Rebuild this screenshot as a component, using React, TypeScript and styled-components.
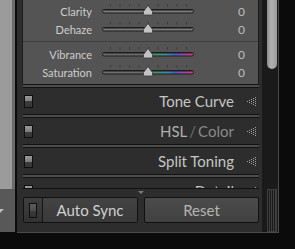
import React from 'react'
import styled, {createGlobalStyle} from 'styled-components'

const GlobalStyle = createGlobalStyle`
  html, body {
    margin: 0;
    padding: 0;
    background: #0b0b0b;
  }

  body {
    font-family: Lato, "Open Sans", sans-serif;
  }
`

const Screen = styled.div`
  width: 295px;
  height: 249px;
  display: flex;
  align-items: flex-start;
  overflow: hidden;
`

const LeftStrip = styled.div`
  width: 15px;
  height: 232px;
  flex-shrink: 0;
  display: flex;
  flex-direction: column;
`

const LeftTop = styled.div`
  height: 189px;
  box-sizing: border-box;
  background: #9b9b9b;
  border-right: 3px solid #6b6b6b;
`

const LeftBottom = styled.div`
  flex: 1;
  background: #585858;
  display: flex;
  align-items: center;
`

const DropArrow = styled.div`
  margin-left: -4px;
  border-left: 4px solid transparent;
  border-right: 4px solid transparent;
  border-top: 4px solid #bdbdbd;
`

const Panel = styled.div`
  margin-left: 2px;
  width: 261px;
  height: 232px;
  flex-shrink: 0;
  background: #2d2d2d;
  border-right: 1px solid #4b4b4b;
  border-bottom: 1px solid #4b4b4b;
  display: grid;
  grid-template-columns: 245px 16px;
  grid-template-rows: 188px 44px;
`

const ScrollArea = styled.div`
  overflow: hidden;
  padding: 0 3px 0 5px;
`

const Scrollbar = styled.div`
  background: #1a1a1a;
`

const Thumb = styled.div`
  margin-left: 5px;
  width: 10px;
  height: 69px;
  border-radius: 0 0 5px 5px;
  background: linear-gradient(to right, #8a8a8a, #b2b2b2 40%, #9a9a9a);
`

const BasicSection = styled.div`
  height: 84px;
  box-sizing: border-box;
  padding: 2px 0 3px;
  background: #545454;
  border-left: 1px solid #1c1c1c;
  border-right: 1px solid #1c1c1c;
`

const SliderRow = styled.div`
  height: 18px;
  display: flex;
  align-items: center;
`

const Label = styled.div`
  width: 69px;
  text-align: right;
  font-size: 11px;
  color: #cecece;
`

const Value = styled.div`
  width: 51px;
  text-align: right;
  font-size: 12px;
  color: #bdbdbd;
`

const Track = styled.svg`
  display: block;
  margin-left: 10px;
  flex-shrink: 0;
`

const Divider = styled.div`
  height: 1px;
  margin: 3px 0;
  background: #3e3e3e;
`

const Separator = styled.div`
  height: 4px;
  box-sizing: border-box;
  margin-left: 1px;
  background: #4c4c4c;
  border-top: 1px solid #121212;
  border-bottom: 1px solid #121212;
`

const Header = styled.div`
  height: 26px;
  display: flex;
  align-items: center;
  padding: 0 3px 0 2px;
`

const Toggle = styled.div`
  width: 9px;
  height: 13px;
  box-sizing: border-box;
  border: 1px solid #0f0f0f;
  background: linear-gradient(#9b9b9b 0, #7c7c7c 50%, #3d3d3d 50%, #353535 100%);
`

const Title = styled.div<{$color?: string}>`
  margin-left: auto;
  margin-right: 13px;
  font-size: 15px;
  color: ${p => p.$color ?? '#c6c6c6'};
`

const Dim = styled.span<{$color: string}>`
  color: ${p => p.$color};
`

const Slash = styled.span`
  color: #6e6e6e;
  margin: 0 2px;
`

const BottomBar = styled.div`
  display: flex;
  flex-direction: column;
  padding: 0 3px 0 5px;
`

const BarLine = styled.div`
  height: 1px;
  background: #131313;
`

const CollapseRow = styled.div`
  height: 8px;
  display: flex;
  justify-content: center;
  align-items: flex-start;
  padding-top: 2px;
  box-sizing: border-box;
`

const CollapseArrow = styled.div`
  border-left: 3px solid transparent;
  border-right: 3px solid transparent;
  border-top: 3px solid #787878;
`

const ButtonRow = styled.div`
  height: 26px;
  display: flex;
  gap: 6px;
  padding-left: 1px;
`

const SyncGroup = styled.div`
  width: 115px;
  box-sizing: border-box;
  display: flex;
  border: 1px solid #111;
  border-radius: 2px;
  overflow: hidden;
`

const SwitchCell = styled.div`
  width: 18px;
  border-right: 1px solid #151515;
  background: linear-gradient(#3e3e3e, #333);
  display: flex;
  align-items: center;
  justify-content: center;
`

const Switch = styled.div`
  width: 8px;
  height: 15px;
  box-sizing: border-box;
  border: 1px solid #0e0e0e;
  background: linear-gradient(#5c5c5c 0, #4e4e4e 50%, #6a6a6a 50%, #6a6a6a 57%, #3a3a3a 57%, #333 100%);
`

const Button = styled.div<{$bright?: boolean}>`
  flex: 1;
  display: flex;
  align-items: center;
  justify-content: center;
  font-size: 15px;
  color: ${p => p.$bright ? '#d0d0d0' : '#b4b4b4'};
  background: ${p => p.$bright
    ? 'linear-gradient(#434343, #393939)'
    : 'linear-gradient(#4b4b4b, #414141)'};
`

const ResetButton = styled(Button)`
  flex: none;
  width: 115px;
  box-sizing: border-box;
  border: 1px solid #111;
  border-radius: 2px;
`

const GripCell = styled.div`
  background: #1a1a1a;
  padding: 1px 0 0 5px;
`

const Grip = styled.div`
  width: 10px;
  height: 43px;
  box-sizing: border-box;
  border: 1px solid #3e3e3e;
  background: repeating-linear-gradient(to right, transparent 0 1px, #3e3e3e 1px 2px);
`

const ticks = [8, 17.5, 27, 36.5, 46, 55.5, 65, 74.5, 84]

const Slider = ({colored, id}: {colored?: boolean, id: string}) => (
    <Track width={92} height={18} viewBox="0 0 92 18">
        <defs>
            <linearGradient id={id} x1="0" x2="1" y1="0" y2="0">
                {colored ? <>
                    <stop offset="0" stopColor="#6c6c6c"/>
                    <stop offset="0.48" stopColor="#6a6e6a"/>
                    <stop offset="0.58" stopColor="#3f9a5c"/>
                    <stop offset="0.7" stopColor="#3b8fa4"/>
                    <stop offset="0.8" stopColor="#4a5ec4"/>
                    <stop offset="0.9" stopColor="#a443b4"/>
                    <stop offset="1" stopColor="#d8405c"/>
                </> : <>
                    <stop offset="0" stopColor="#7a7a7a"/>
                    <stop offset="1" stopColor="#7a7a7a"/>
                </>}
            </linearGradient>
        </defs>
        {ticks.map(x => <line key={x} x1={x + 0.5} x2={x + 0.5} y1={2} y2={4.5} stroke="#3a3a3a"/>)}
        <rect x={0.5} y={7.5} width={91} height={3.5} rx={1.75} fill={`url(#${id})`} stroke="#1c1c1c"/>
        <line x1={2} x2={90} y1={8.5} y2={8.5} stroke="#2a2a2a" strokeOpacity={0.6}/>
        <path d="M46 3.5 L50.5 9.5 V12 Q50.5 13 49.5 13 H42.5 Q41.5 13 41.5 12 V9.5 Z"
              fill="#c3c3c3" stroke="#3a3a3a" strokeWidth={0.8}/>
    </Track>
)

const DotTriangle = () => {
    const dots: React.ReactNode[] = []
    for (let c = 0; c < 5; c++) {
        for (let r = -c; r <= c; r += 2) {
            dots.push(<rect key={`${c}-${r}`} x={c * 2} y={4 + r} width={1} height={1} fill="#a0a0a0"/>)
        }
    }
    return <svg width={9} height={9} viewBox="0 0 9 9">{dots}</svg>
}

const rows = [
    {label: 'Clarity', colored: false},
    {label: 'Dehaze', colored: false},
    {label: 'Vibrance', colored: true},
    {label: 'Saturation', colored: true},
]

const SectionHeader = ({children, color}: {children: React.ReactNode, color?: string}) => (
    <Header>
        <Toggle/>
        <Title $color={color}>{children}</Title>
        <DotTriangle/>
    </Header>
)

const App = () => {
    return (
        <Screen>
            <GlobalStyle/>
            <LeftStrip>
                <LeftTop/>
                <LeftBottom><DropArrow/></LeftBottom>
            </LeftStrip>
            <Panel>
                <ScrollArea>
                    <BasicSection>
                        {rows.map((r, i) => (
                            <React.Fragment key={r.label}>
                                {i === 2 && <Divider/>}
                                <SliderRow>
                                    <Label>{r.label}</Label>
                                    <Slider colored={r.colored} id={`grad-${i}`}/>
                                    <Value>0</Value>
                                </SliderRow>
                            </React.Fragment>
                        ))}
                    </BasicSection>
                    <Separator/>
                    <SectionHeader>Tone Curve</SectionHeader>
                    <Separator/>
                    <SectionHeader color="#b0b0b0">
                        HSL<Slash>/</Slash><Dim $color="#8a8a8a">Color</Dim>
                    </SectionHeader>
                    <Separator/>
                    <SectionHeader>Split Toning</SectionHeader>
                    <Separator/>
                    <SectionHeader>Detail</SectionHeader>
                </ScrollArea>
                <Scrollbar>
                    <Thumb/>
                </Scrollbar>
                <BottomBar>
                    <BarLine/>
                    <CollapseRow><CollapseArrow/></CollapseRow>
                    <ButtonRow>
                        <SyncGroup>
                            <SwitchCell><Switch/></SwitchCell>
                            <Button $bright>Auto Sync</Button>
                        </SyncGroup>
                        <ResetButton>Reset</ResetButton>
                    </ButtonRow>
                </BottomBar>
                <GripCell>
                    <Grip/>
                </GripCell>
            </Panel>
        </Screen>
    )
}

export default App
